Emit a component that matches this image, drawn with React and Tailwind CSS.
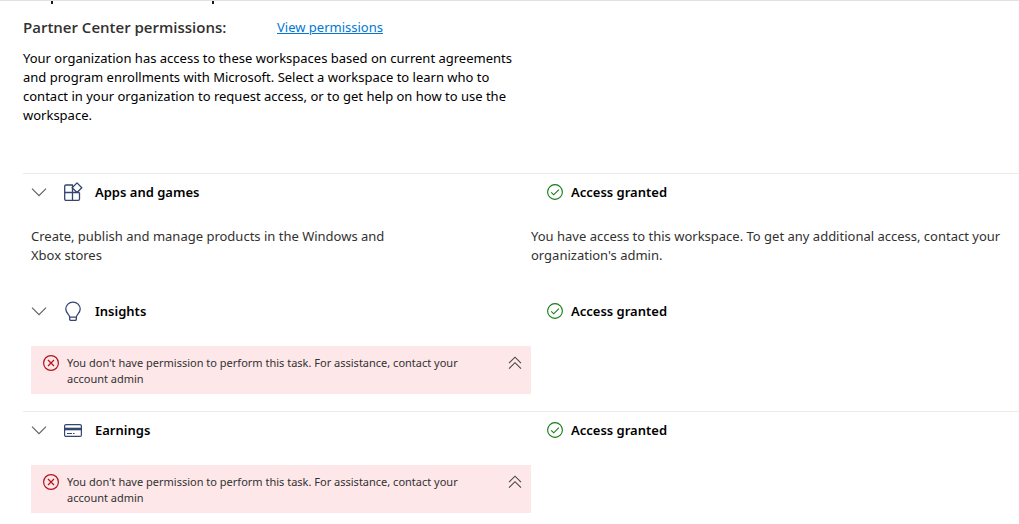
function Chevron() {
  return (
    <svg className="h-4 w-4" viewBox="0 0 16 16" fill="none" stroke="#605e5c" strokeWidth="1.1">
      <path d="M1 4.7l7 7 7-7" />
    </svg>
  );
}

function DoubleChevron() {
  return (
    <svg className="h-4 w-4" viewBox="0 0 16 16" fill="none" stroke="#484644" strokeWidth="1.1">
      <path d="M2 8.2l6-6 6 6M2 13.7l6-6 6 6" />
    </svg>
  );
}

function AppsIcon() {
  return (
    <svg className="h-5 w-5" viewBox="0 0 20 20" fill="none" stroke="#33466f" strokeWidth="1.3">
      <path d="M10 3H3a1.300 1.300 0 0 0-1.300 1.300V17a1.300 1.300 0 0 0 1.300 1.300h12.200a1.300 1.300 0 0 0 1.300-1.300v-6.500M9.500 3v15.300M1.700 10.500h14.800" />
      <path d="M14 .9l4.800 4.800-4.800 4.800-4.800-4.800z" fill="#ffffff" strokeLinejoin="round" />
    </svg>
  );
}

function BulbIcon() {
  return (
    <svg className="h-5 w-5" viewBox="0 0 20 20" fill="none" stroke="#33466f" strokeWidth="1.3" strokeLinejoin="round">
      <path d="M6.700 16.200c0-2.600-3.900-4-3.900-8.200a7.200 6.900 0 0 1 14.400 0c0 4.200-3.900 5.600-3.900 8.200zM6.700 16.200v2.100a1.100 1.100 0 0 0 1.100 1.100h4.400a1.100 1.100 0 0 0 1.100-1.100v-2.100" />
    </svg>
  );
}

function CardIcon() {
  return (
    <svg className="h-5 w-5" viewBox="0 0 20 20" fill="none" stroke="#33466f" strokeWidth="1.200">
      <rect x="1.600" y="4.600" width="16.800" height="11.800" rx="1.500" />
      <path d="M1.600 9h16.800" strokeWidth="2.600" />
      <path d="M4 13.500h5M10 13.500h1.500" />
    </svg>
  );
}

function GrantedIcon() {
  return (
    <svg className="h-4 w-4" viewBox="0 0 16 16" fill="none" stroke="#107c10" strokeWidth="1.100">
      <circle cx="8" cy="8" r="7.400" />
      <path d="M4.200 8.300l2.500 2.500 5.200-5.200" />
    </svg>
  );
}

function ErrorIcon() {
  return (
    <svg className="h-4 w-4" viewBox="0 0 16 16" fill="none" stroke="#b5121b" strokeWidth="1.200">
      <circle cx="8" cy="8" r="7.400" />
      <path d="M5 5l6 6M11 5l-6 6" />
    </svg>
  );
}

function WorkspaceHeader({ icon, name }) {
  return (
    <div className="grid grid-cols-[508px_1fr] items-center pt-2">
      <div className="flex h-5 items-center pl-2">
        <button type="button" aria-label={`Expand ${name}`} className="mr-4">
          <Chevron />
        </button>
        {icon}
        <h2 className="ml-3 text-[13px] font-semibold text-black">{name}</h2>
      </div>
      <div className="flex h-5 items-center gap-2 pl-4 text-[13px] font-semibold text-black">
        <GrantedIcon />
        <span>Access granted</span>
      </div>
    </div>
  );
}

function PermissionError() {
  return (
    <div role="alert" className="ml-2 flex min-h-12 w-[500px] items-start bg-[#fde7e9] px-2 pt-[9px] text-[11px] leading-4 text-[#323130]">
      <span className="mx-1">
        <ErrorIcon />
      </span>
      <p className="ml-1 flex-1">
        You don't have permission to perform this task. For assistance, contact your
        <br />
        account admin
      </p>
      <button type="button" aria-label="Collapse message">
        <DoubleChevron />
      </button>
    </div>
  );
}

export default function App() {
  return (
    <main className="bg-white font-['Noto_Sans','Open_Sans',sans-serif] text-[13px] leading-[19px] text-[#323130]">
      <div className="flex h-1 border-t border-[#e1e1e1] pl-[51px]">
        <span className="mr-[159px] h-[3px] w-0.5 bg-[#1b1a19]" />
        <span className="h-[3px] w-0.5 bg-[#1b1a19]" />
      </div>
      <div className="flex items-center pt-[11px] pl-[23px]">
        <h1 className="w-[254px] font-['Open_Sans','Noto_Sans',sans-serif] text-[15px] leading-6 font-semibold">Partner Center permissions:</h1>
        <a href="#permissions" className="text-[#0078d4] underline">View permissions</a>
      </div>
      <p className="mt-2.5 pl-[23px] text-black">
        Your organization has access to these workspaces based on current agreements
        <br />
        and program enrollments with Microsoft. Select a workspace to learn who to
        <br />
        contact in your organization to request access, or to get help on how to use the
        <br />
        workspace.
      </p>
      <div className="mt-12 pl-[23px]">
        <section className="min-h-[119px] border-t border-[#edebe9]">
          <WorkspaceHeader icon={<AppsIcon />} name="Apps and games" />
          <div className="mt-[25px] grid grid-cols-[500px_1fr] pl-2">
            <p>
              Create, publish and manage products in the Windows and
              <br />
              Xbox stores
            </p>
            <p>
              You have access to this workspace. To get any additional access, contact your
              <br />
              organization's admin.
            </p>
          </div>
        </section>
        <section className="min-h-[119px] pt-px">
          <WorkspaceHeader icon={<BulbIcon />} name="Insights" />
          <div className="mt-[25px]">
            <PermissionError />
          </div>
        </section>
        <section className="border-t border-[#edebe9]">
          <WorkspaceHeader icon={<CardIcon />} name="Earnings" />
          <div className="mt-[25px]">
            <PermissionError />
          </div>
        </section>
      </div>
    </main>
  );
}
